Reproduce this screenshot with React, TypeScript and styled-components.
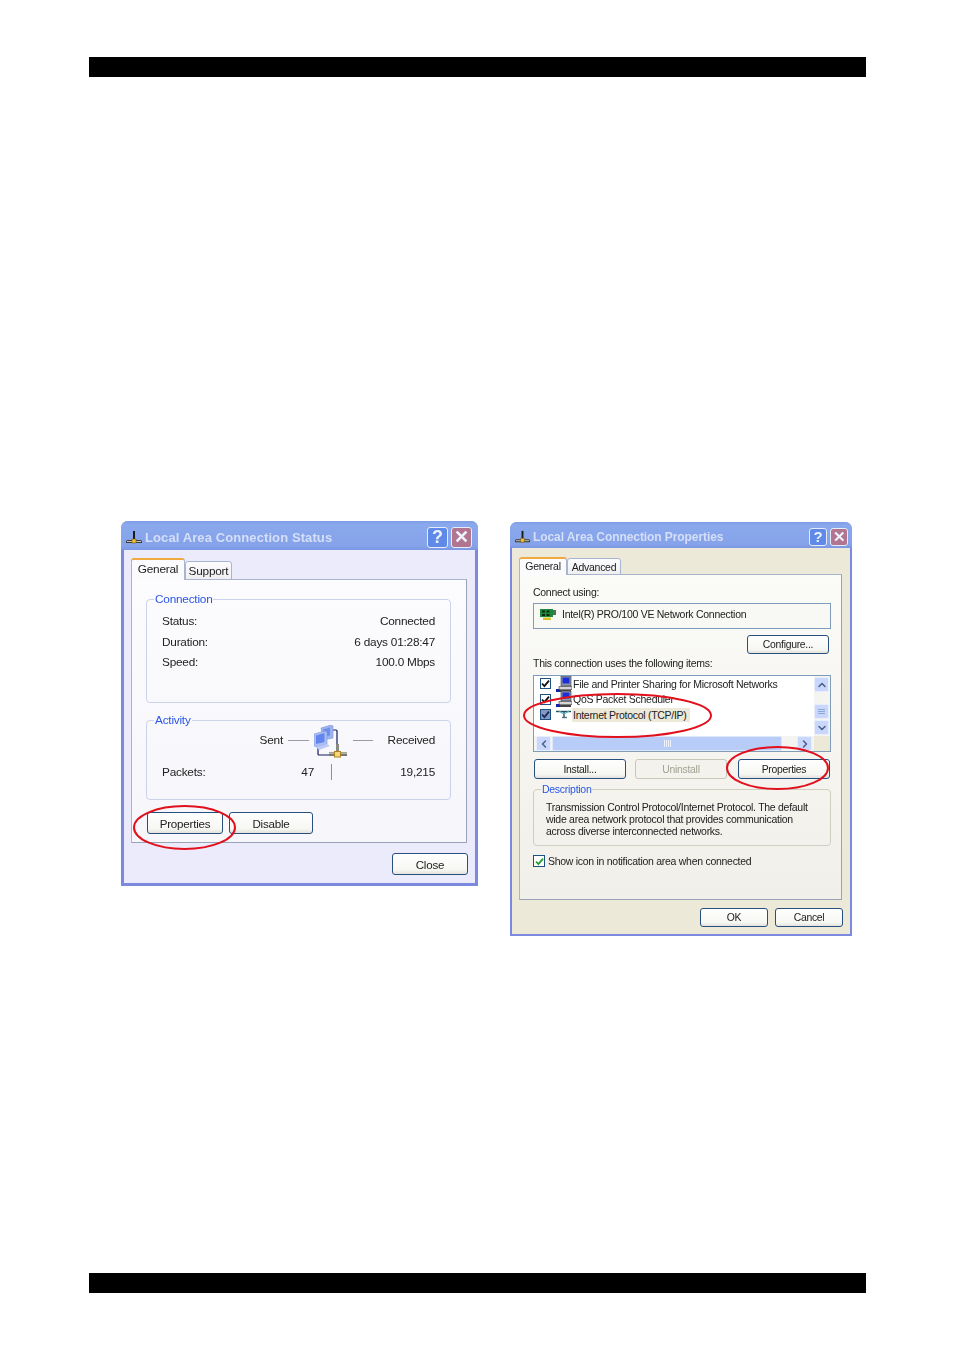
import React from 'react';
import styled, { createGlobalStyle } from 'styled-components';
import { ChevronUp, ChevronDown, ChevronLeft, ChevronRight } from 'lucide-react';

const GlobalStyle = createGlobalStyle`
  html, body {
    margin: 0;
    padding: 0;
    background: #fff;
  }
  * {
    box-sizing: border-box;
  }
`;

const Page = styled.div`
  width: 954px;
  height: 1350px;
  padding: 57px 88px 57px 89px;
  display: flex;
  flex-direction: column;
  font-family: 'Liberation Sans', Arial, sans-serif;
  color: #222;
  overflow: hidden;
`;

const Bar = styled.div`
  height: 20px;
  background: #000;
  flex: none;
`;

const Content = styled.div`
  flex: 1;
  display: flex;
  align-items: flex-start;
  gap: 32px;
  padding: 444px 0 0 32px;
`;

const Dialog = styled.div<{ $w: number; $h: number; $bg: string; $top: number; $border: number; $squeeze: number }>`
  position: relative;
  width: ${({ $w }) => $w}px;
  height: ${({ $h }) => $h}px;
  margin-top: ${({ $top }) => $top}px;
  background: ${({ $bg }) => $bg};
  border: ${({ $border }) => $border}px solid #7b8ae0;
  border-top: none;
  border-radius: 7px 7px 0 0;
  letter-spacing: ${({ $squeeze }) => $squeeze}px;
  display: flex;
  flex-direction: column;
  filter: blur(0.3px);
`;

const TitleBar = styled.div<{ $h: number; $border: number; $right: number }>`
  height: ${({ $h }) => $h}px;
  margin: 0 -${({ $border }) => $border}px;
  padding: 3px ${({ $right }) => $right}px 0 5px;
  flex: none;
  display: flex;
  align-items: center;
  border-radius: 7px 7px 0 0;
  background: linear-gradient(#7c9de6, #8aa8ec 12%, #86a3ea 85%, #7b97e3);
`;

const TitleText = styled.div<{ $size: number; $spacing: number }>`
  flex: 1;
  margin-left: 3px;
  font-size: ${({ $size }) => $size}px;
  font-weight: 700;
  letter-spacing: ${({ $spacing }) => $spacing}px;
  color: #d5dff8;
  white-space: nowrap;
`;

const CaptionButton = styled.div<{ $kind: 'help' | 'close'; $size: number }>`
  width: ${({ $size }) => $size}px;
  height: ${({ $size }) => $size}px;
  margin-left: 3px;
  border: 1px solid #e6ecfb;
  border-radius: 3px;
  background: ${({ $kind }) => ($kind === 'help' ? '#5f8ae8' : '#b27590')};
  color: #eef2fc;
  font-size: ${({ $size }) => $size - 3}px;
  font-weight: 700;
  display: flex;
  align-items: center;
  justify-content: center;
`;

const Body = styled.div<{ $pad: string }>`
  flex: 1;
  padding: ${({ $pad }) => $pad};
  display: flex;
  flex-direction: column;
`;

const Tabs = styled.div<{ $size: number }>`
  display: flex;
  align-items: flex-end;
  font-size: ${({ $size }) => $size}px;
  position: relative;
  z-index: 1;
  margin-bottom: -1px;
`;

const Tab = styled.div<{ $w: number; $h: number; $active?: boolean }>`
  width: ${({ $w }) => $w}px;
  height: ${({ $h }) => $h}px;
  padding-bottom: ${({ $active }) => ($active ? 3 : 0)}px;
  display: flex;
  align-items: center;
  justify-content: center;
  border: 1px solid #a9b4cf;
  border-bottom: ${({ $active }) => ($active ? 'none' : '1px solid #a9b4cf')};
  border-top: ${({ $active }) => ($active ? '2px solid #f0a93f' : '1px solid #a9b4cf')};
  border-radius: 3px 3px 0 0;
  background: ${({ $active }) => ($active ? '#fbfbfd' : 'linear-gradient(#fcfcfe, #efeff2)')};
`;

const Panel = styled.div<{ $h: number; $pad: string; $bg: string }>`
  height: ${({ $h }) => $h}px;
  padding: ${({ $pad }) => $pad};
  background: ${({ $bg }) => $bg};
  border: 1px solid #a9b4cf;
  border-right-color: #9aa2b8;
  border-bottom-color: #9aa2b8;
  display: flex;
  flex-direction: column;
`;

const Group = styled.fieldset<{ $h: number; $line: string; $top?: number }>`
  height: ${({ $h }) => $h}px;
  margin: ${({ $top }) => $top ?? 0}px 0 0;
  padding: 0;
  min-width: 0;
  border: 1px solid ${({ $line }) => $line};
  border-radius: 4px;
  flex: none;
`;

const Legend = styled.legend<{ $left: number; $size: number }>`
  margin-left: ${({ $left }) => $left}px;
  padding: 0 1px;
  font-size: ${({ $size }) => $size}px;
  line-height: 13px;
  color: #2a56e6;
`;

const InfoList = styled.div`
  padding: 5px 15px 0 15px;
  font-size: 11.8px;
`;

const InfoRow = styled.div`
  height: 20.4px;
  display: flex;
  align-items: center;
  justify-content: space-between;
`;

const ActivityHead = styled.div`
  display: grid;
  grid-template-columns: 121px 21px 34px 20px 1fr;
  column-gap: 5px;
  align-items: center;
  padding: 0 15px;
  height: 35px;
  margin-top: -3px;
  font-size: 11.8px;

  & > div:first-child,
  & > div:last-child {
    margin-top: -3px;
  }
`;

const RightText = styled.div`
  text-align: right;
`;

const Dash = styled.div`
  height: 1px;
  margin-top: -2px;
  background: #9a9aa4;
`;

const PacketRow = styled.div`
  display: flex;
  align-items: center;
  height: 16px;
  padding: 0 15px;
  margin-top: 5px;
  font-size: 11.8px;
`;

const PacketLabel = styled.div`
  width: 152px;
`;

const PacketSent = styled.div`
  margin-left: -60px;
  width: 60px;
  text-align: right;
`;

const PacketDivider = styled.div`
  width: 1px;
  height: 16px;
  margin-left: 17px;
  background: #8f8f98;
`;

const PacketReceived = styled(RightText)`
  flex: 1;
`;

const ButtonRow = styled.div<{ $gap: number; $top: number; $left: number; $end?: boolean }>`
  display: flex;
  gap: ${({ $gap }) => $gap}px;
  margin-top: ${({ $top }) => $top}px;
  margin-left: ${({ $left }) => $left}px;
  justify-content: ${({ $end }) => ($end ? 'flex-end' : 'flex-start')};
`;

const Button = styled.div<{
  $w: number;
  $h: number;
  $size: number;
  $disabled?: boolean;
  $nudge?: number;
  $lead?: number;
}>`
  width: ${({ $w }) => $w}px;
  height: ${({ $h }) => $h}px;
  margin-right: ${({ $nudge }) => $nudge ?? 0}px;
  margin-left: ${({ $lead }) => $lead ?? 0}px;
  flex: none;
  display: flex;
  align-items: center;
  justify-content: center;
  font-size: ${({ $size }) => $size}px;
  border: 1px solid ${({ $disabled }) => ($disabled ? '#c9c7ba' : '#28507f')};
  border-radius: 3px;
  color: ${({ $disabled }) => ($disabled ? '#a3a293' : '#222')};
  background: ${({ $disabled }) =>
    $disabled ? '#f3f2ec' : 'linear-gradient(#fff, #f6f6f2 80%, #e3e2dc)'};
`;

const SmallText = styled.div<{ $top: number }>`
  margin-top: ${({ $top }) => $top}px;
  font-size: 10.5px;
  line-height: 13px;
  white-space: nowrap;
`;

const AdapterBox = styled.div`
  height: 26px;
  margin-top: 4px;
  padding: 0 0 5px 6px;
  display: flex;
  align-items: center;
  gap: 6px;
  font-size: 10.5px;
  background: #f8f8f5;
  border: 1px solid #7f9db9;
`;

const ListBox = styled.div`
  height: 77px;
  margin-top: 5px;
  display: grid;
  grid-template-columns: 1fr 16px;
  grid-template-rows: 1fr 15px;
  background: #fff;
  border: 1px solid #7f9db9;
  font-size: 10.5px;
`;

const ListItems = styled.div`
  padding: 0 0 0 6px;
`;

const ListItem = styled.div`
  height: 15.5px;
  display: flex;
  align-items: center;
`;

const IconGap = styled.span`
  width: 5px;
`;

const ItemLabel = styled.span<{ $selected?: boolean }>`
  padding: 1px 3px 1px 1px;
  white-space: nowrap;
  background: ${({ $selected }) => ($selected ? '#ece9d8' : 'transparent')};
`;

const CheckBox = styled.div<{ $size: number; $bg: string }>`
  width: ${({ $size }) => $size}px;
  height: ${({ $size }) => $size}px;
  flex: none;
  display: flex;
  align-items: center;
  justify-content: center;
  border: 1px solid #1c5180;
  background: ${({ $bg }) => $bg};
`;

const VScroll = styled.div`
  display: flex;
  flex-direction: column;
  padding: 1px 1px 0 0;
  background: #f4f4f1;
`;

const HScroll = styled.div`
  display: flex;
  align-items: stretch;
  padding: 0 2px;
  background: #f4f4f1;
`;

const ScrollButton = styled.div`
  width: 15px;
  height: 15px;
  flex: none;
  display: flex;
  align-items: center;
  justify-content: center;
  color: #4a5f86;
  background: #c8d7fb;
  border: 1px solid #e8eefc;
  border-radius: 2px;
`;

const VThumb = styled(ScrollButton)`
  margin: 12px 0 1px;
  gap: 1px;
  flex-direction: column;
`;

const HThumb = styled.div`
  flex: 1;
  margin: 0 15px 0 1px;
  display: flex;
  align-items: center;
  justify-content: center;
  gap: 1px;
  background: #b7cdf8;
  border: 1px solid #dfe8fb;
  border-radius: 2px;
`;

const GripV = styled.span`
  width: 1px;
  height: 7px;
  background: #eef3fd;
`;

const GripH = styled.span`
  width: 7px;
  height: 1px;
  background: #8ea6d6;
`;

const Corner = styled.div`
  background: #ece9d8;
`;

const DescriptionText = styled.div`
  padding: 5px 0 0 12px;
  font-size: 10.5px;
  line-height: 12px;
  white-space: nowrap;
`;

const ShowIconRow = styled.label`
  margin-top: 9px;
  display: flex;
  align-items: center;
  gap: 3px;
  font-size: 10.5px;
`;

const Ring = styled.svg<{ $x: number; $y: number }>`
  position: absolute;
  left: ${({ $x }) => $x}px;
  top: ${({ $y }) => $y}px;
  overflow: visible;
  z-index: 2;
`;

// red marker circles drawn over the screenshot
const RedRing: React.FC<{ x: number; y: number; w: number; h: number }> = ({ x, y, w, h }) => (
  <Ring $x={x} $y={y} width={w} height={h} viewBox={`0 0 ${w} ${h}`}>
    <ellipse
      cx={w / 2}
      cy={h / 2}
      rx={w / 2 - 1}
      ry={h / 2 - 1}
      fill="none"
      stroke="#e2101c"
      strokeWidth={2}
    />
  </Ring>
);

const PlugIcon: React.FC<{ size: number }> = ({ size }) => (
  <svg width={size} height={size} viewBox="0 0 16 16" style={{ flex: 'none' }}>
    <path d="M7 2h2v8H7z" fill="#1a1a1a" />
    <path d="M0 12.5 Q0 11 2 11h12q2 0 2 1.5V14H0z" fill="#3c3c34" />
    <path d="M1 12h14v1H1z" fill="#c9c8bb" />
    <path d="M6 10h4v4H6z" fill="#f2c23c" stroke="#6a5410" strokeWidth={0.6} />
  </svg>
);

const NetworkIcon = () => (
  <svg width={34} height={34} viewBox="0 0 34 34">
    <path d="M18 5h4a1 1 0 0 1 1 1v17M4 22v7a1 1 0 0 0 1 1h12" fill="none" stroke="#121a5c" strokeWidth={1.2} />
    <path d="M7 3l10-3 2 1v12l-10 2z" fill="#9db3ee" stroke="#7f96d8" strokeWidth={0.6} />
    <path d="M9 4.4l7-2v8l-7 1.6z" fill="#6f8eec" />
    <path d="M0 9l11-3 2 1v12L3 22l-3-1z" fill="#aabff3" stroke="#7f96d8" strokeWidth={0.6} />
    <path d="M2 10.4l8.5-2.300v9L2 19z" fill="#6485ee" />
    <path d="M2 22l11-3 3 2-11 4z" fill="#bccbf5" />
    <path d="M15 27h18v4H15z" fill="#77776f" />
    <path d="M15 27.5h18v1.2H15z" fill="#d0d0c8" />
    <path d="M22 19h3v8h-3z" fill="#8a8a80" />
    <rect x="20.5" y="26.5" width="6" height="5.5" fill="#f4d67a" stroke="#b0801c" strokeWidth={1} />
  </svg>
);

const PcIcon = () => (
  <svg width={16} height={16} viewBox="0 0 16 16" style={{ flex: 'none' }}>
    <path d="M5 0h10v10H5z" fill="#8f96a8" stroke="#2e3244" strokeWidth={0.6} />
    <path d="M6.5 1.5h7v6h-7z" fill="#1c2fd6" />
    <path d="M0 13h4v3H0z" fill="#1024a8" />
    <path d="M3 10.5h13v3H3z" fill="#d5d5d5" stroke="#333" strokeWidth={0.6} />
    <path d="M4 14h11v2H4z" fill="#444" />
  </svg>
);

const ProtocolIcon = () => (
  <svg width={16} height={9} viewBox="0 0 16 9" style={{ flex: 'none' }}>
    <path d="M0 1.5h15" stroke="#2a4f55" strokeWidth={1.4} />
    <path d="M8 2v6" stroke="#2a4f55" strokeWidth={1.4} />
    <path d="M3 1l4 2.5h2L13 1" fill="none" stroke="#4fb3c4" strokeWidth={1.2} />
    <path d="M6 7.5h5" stroke="#50707a" strokeWidth={1.4} />
  </svg>
);

const NicIcon = () => (
  <svg width={16} height={12} viewBox="0 0 16 12" style={{ flex: 'none' }}>
    <path d="M0 1h13v8H0z" fill="#1d8a3a" />
    <path d="M2 2.5h3v2H2zM6.5 2.5h3v2h-3zM2 6h3v2H2zM6.5 6h3v2h-3z" fill="#0c2a12" />
    <path d="M13 2h3v5h-3z" fill="#5a6a5a" />
    <path d="M3 9.5h8V12H3z" fill="#d9c22c" />
  </svg>
);

const Tick: React.FC<{ color: string }> = ({ color }) => (
  <svg width={9} height={9} viewBox="0 0 9 9">
    <path d="M1 4.5l2.4 2.6L8 1.6" fill="none" stroke={color} strokeWidth={1.8} />
  </svg>
);

const items = [
  { label: 'File and Printer Sharing for Microsoft Networks', icon: <PcIcon /> },
  { label: 'QoS Packet Scheduler', icon: <PcIcon /> },
  { label: 'Internet Protocol (TCP/IP)', icon: <ProtocolIcon />, selected: true },
];

const StatusDialog = () => (
  <Dialog $w={357} $h={365} $bg="#ecebfb" $top={0} $border={3} $squeeze={-0.22}>
    <TitleBar $h={29} $border={3} $right={6}>
      <PlugIcon size={16} />
      <TitleText $size={13} $spacing={0.1}>Local Area Connection Status</TitleText>
      <CaptionButton $kind="help" $size={21}>?</CaptionButton>
      <CaptionButton $kind="close" $size={21}>✕</CaptionButton>
    </TitleBar>
    <Body $pad="8px 8px 0 7px">
      <Tabs $size={11.8}>
        <Tab $w={54} $h={22} $active>General</Tab>
        <Tab $w={47} $h={19}>Support</Tab>
      </Tabs>
      <Panel $h={264} $pad="13px 15px 0 14px" $bg="linear-gradient(#fcfcfe, #f6f6fb)">
        <Group $h={110} $line="#ccd2ea">
          <Legend $left={7} $size={11.8}>Connection</Legend>
          <InfoList>
            <InfoRow><span>Status:</span><span>Connected</span></InfoRow>
            <InfoRow><span>Duration:</span><span>6 days 01:28:47</span></InfoRow>
            <InfoRow><span>Speed:</span><span>100.0 Mbps</span></InfoRow>
          </InfoList>
        </Group>
        <Group $h={86} $line="#ccd2ea" $top={11}>
          <Legend $left={7} $size={11.8}>Activity</Legend>
          <ActivityHead>
            <RightText>Sent</RightText>
            <Dash />
            <NetworkIcon />
            <Dash />
            <RightText>Received</RightText>
          </ActivityHead>
          <PacketRow>
            <PacketLabel>Packets:</PacketLabel>
            <PacketSent>47</PacketSent>
            <PacketDivider />
            <PacketReceived>19,215</PacketReceived>
          </PacketRow>
        </Group>
        <ButtonRow $gap={6} $top={12} $left={1}>
          <Button $w={76} $h={22} $size={11.6}>Properties</Button>
          <Button $w={84} $h={22} $size={11.6}>Disable</Button>
        </ButtonRow>
      </Panel>
      <ButtonRow $gap={0} $top={10} $left={0} $end>
        <Button $w={76} $h={22} $size={11.6} $nudge={-1}>Close</Button>
      </ButtonRow>
    </Body>
    <RedRing x={9} y={284} w={103} h={45} />
  </Dialog>
);

const PropertiesDialog = () => (
  <Dialog $w={342} $h={414} $bg="#ece9d8" $top={1} $border={2} $squeeze={-0.28}>
    <TitleBar $h={26} $border={2} $right={4}>
      <PlugIcon size={15} />
      <TitleText $size={12} $spacing={-0.08}>Local Area Connection Properties</TitleText>
      <CaptionButton $kind="help" $size={18}>?</CaptionButton>
      <CaptionButton $kind="close" $size={18}>✕</CaptionButton>
    </TitleBar>
    <Body $pad="9px 8px 0 7px">
      <Tabs $size={10.5}>
        <Tab $w={48} $h={18} $active>General</Tab>
        <Tab $w={54} $h={17}>Advanced</Tab>
      </Tabs>
      <Panel $h={326} $pad="11px 10px 0 13px" $bg="linear-gradient(#fbfbf8, #f1efe9)">
        <SmallText $top={0}>Connect using:</SmallText>
        <AdapterBox>
          <NicIcon />
          <span>Intel(R) PRO/100 VE Network Connection</span>
        </AdapterBox>
        <ButtonRow $gap={0} $top={6} $left={0} $end>
          <Button $w={82} $h={19} $size={10.4} $nudge={2}>Configure...</Button>
        </ButtonRow>
        <SmallText $top={3}>This connection uses the following items:</SmallText>
        <ListBox>
          <ListItems>
            {items.map(item => (
              <ListItem key={item.label}>
                <CheckBox $size={11} $bg={item.selected ? '#8497c6' : '#fff'}>
                  <Tick color={item.selected ? '#1b2a50' : '#111'} />
                </CheckBox>
                <IconGap />
                {item.icon}
                <ItemLabel $selected={item.selected}>{item.label}</ItemLabel>
              </ListItem>
            ))}
          </ListItems>
          <VScroll>
            <ScrollButton><ChevronUp size={12} strokeWidth={3} /></ScrollButton>
            <VThumb>
              <GripH /><GripH /><GripH />
            </VThumb>
            <ScrollButton><ChevronDown size={12} strokeWidth={3} /></ScrollButton>
          </VScroll>
          <HScroll>
            <ScrollButton><ChevronLeft size={12} strokeWidth={3} /></ScrollButton>
            <HThumb>
              <GripV /><GripV /><GripV /><GripV />
            </HThumb>
            <ScrollButton><ChevronRight size={12} strokeWidth={3} /></ScrollButton>
          </HScroll>
          <Corner />
        </ListBox>
        <ButtonRow $gap={9} $top={7} $left={1}>
          <Button $w={92} $h={20} $size={10.4}>Install...</Button>
          <Button $w={92} $h={20} $size={10.4} $disabled>Uninstall</Button>
          <Button $w={92} $h={20} $size={10.4} $lead={2}>Properties</Button>
        </ButtonRow>
        <Group $h={63} $line="#d0cebf" $top={4}>
          <Legend $left={7} $size={10.5}>Description</Legend>
          <DescriptionText>
            Transmission Control Protocol/Internet Protocol. The default
            <br />
            wide area network protocol that provides communication
            <br />
            across diverse interconnected networks.
          </DescriptionText>
        </Group>
        <ShowIconRow>
          <CheckBox $size={12} $bg="#fff">
            <Tick color="#22a02c" />
          </CheckBox>
          Show icon in notification area when connected
        </ShowIconRow>
      </Panel>
      <ButtonRow $gap={7} $top={8} $left={0} $end>
        <Button $w={68} $h={19} $size={10.4}>OK</Button>
        <Button $w={68} $h={19} $size={10.4} $nudge={-1}>Cancel</Button>
      </ButtonRow>
    </Body>
    <RedRing x={11} y={171} w={189} h={45} />
    <RedRing x={214} y={224} w={103} h={44} />
  </Dialog>
);

const App = () => (
  <Page>
    <GlobalStyle />
    <Bar />
    <Content>
      <StatusDialog />
      <PropertiesDialog />
    </Content>
    <Bar />
  </Page>
);

export default App;
